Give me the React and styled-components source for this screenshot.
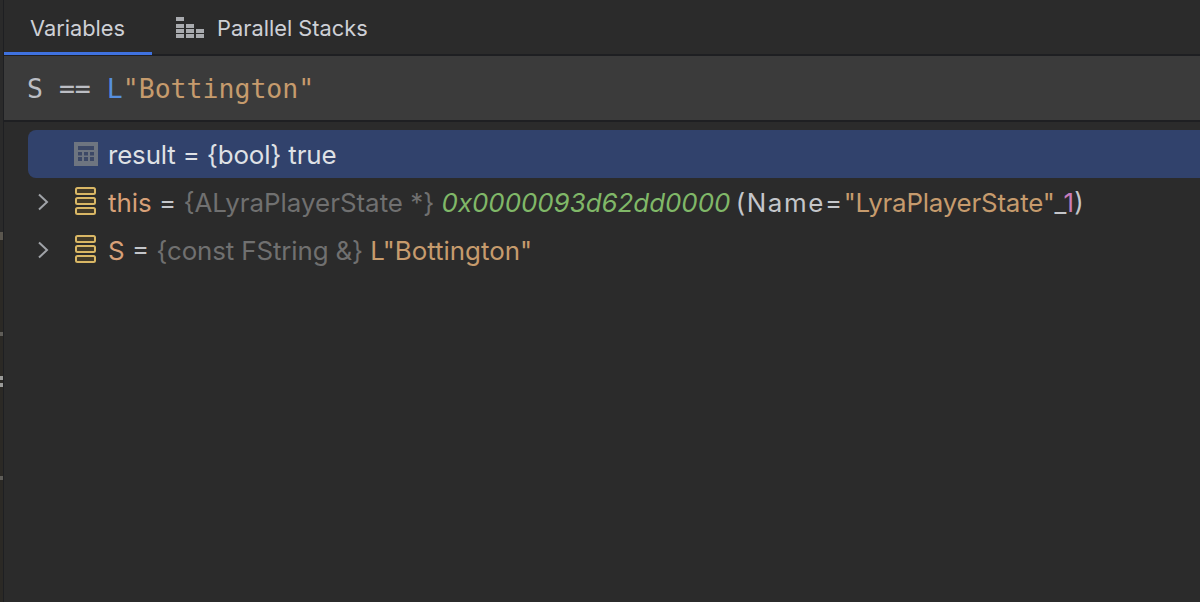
import styled, { createGlobalStyle } from "styled-components";

const GlobalStyle = createGlobalStyle`
  html, body {
    margin: 0;
    height: 100%;
    overflow: hidden;
    background: #2b2b2b;
  }
  #root {
    height: 100%;
  }
`;

const colors = {
  plain: "#c4c6ca",
  muted: "#707070",
  orange: "#d7a078",
  tan: "#c69b6d",
  green: "#80b868",
  pink: "#c77dbb",
  blue: "#568fdf",
};

const StackIcon = () => (
  <svg width="22" height="30" viewBox="0 0 22 30" fill="#423a29" stroke="#d9b765" strokeWidth="2">
    <rect x="2" y="1" width="19" height="6" rx="1.5" />
    <rect x="2" y="11" width="19" height="6" rx="1.5" />
    <rect x="2" y="21" width="19" height="6" rx="1.5" />
  </svg>
);

const TableIcon = () => (
  <svg width="24" height="24" viewBox="0 0 24 24">
    <rect width="24" height="24" fill="#6e7580" />
    <g fill="#3c4866">
      <rect x="4" y="4" width="16" height="4" />
      <rect x="4" y="10" width="4" height="3.5" />
      <rect x="10" y="10" width="4" height="3.5" />
      <rect x="16" y="10" width="4" height="3.5" />
      <rect x="4" y="15" width="4" height="4" />
      <rect x="10" y="15" width="4" height="4" />
      <rect x="16" y="15" width="4" height="4" />
    </g>
  </svg>
);

const StacksIcon = () => (
  <svg width="28" height="22" viewBox="0 0 28 22" fill="#a9abaf">
    <rect x="0" y="0" width="8" height="4" />
    <rect x="0" y="7" width="8" height="4" />
    <rect x="0" y="12" width="8" height="4" />
    <rect x="0" y="17" width="8" height="4" />
    <rect x="10" y="7" width="8" height="4" />
    <rect x="10" y="12" width="8" height="4" />
    <rect x="10" y="17" width="8" height="4" />
    <rect x="20" y="12" width="8" height="4" />
    <rect x="20" y="17" width="8" height="4" />
  </svg>
);

const Chevron = () => (
  <svg width="12" height="18" viewBox="0 0 12 18" fill="none" stroke="#a0a3a8" strokeWidth="2">
    <path d="M2 1.5L10 9l-8 7.5" />
  </svg>
);

export default function App() {
  return (
    <Page>
      <GlobalStyle />
      <SideStrip />
      <Main>
        <TabBar>
          <Tab $active>Variables</Tab>
          <Tab>
            <StacksIcon />
            Parallel Stacks
          </Tab>
        </TabBar>
        <Expression>
          <span>S == </span>
          <Colored $color={colors.blue}>L</Colored>
          <Colored $color={colors.tan}>"Bottington"</Colored>
        </Expression>
        <Tree>
          <Row $selected>
            <Arrow />
            <IconSlot>
              <TableIcon />
            </IconSlot>
            <RowText>
              <Colored $color="#dfe1e5" $spacing="-0.15px">result = {"{bool}"} true</Colored>
            </RowText>
          </Row>
          <Row>
            <Arrow>
              <Chevron />
            </Arrow>
            <IconSlot>
              <StackIcon />
            </IconSlot>
            <RowText>
              <Colored $color={colors.orange}>this</Colored> ={" "}
              <Colored $color={colors.muted}>{"{ALyraPlayerState *}"}</Colored>{" "}
              <Address>0x0000093d62dd0000</Address> <NameKey>(Name=</NameKey>
              <Colored $color={colors.tan} $spacing="-0.2px">"LyraPlayerState"</Colored>
              _<Colored $color={colors.pink}>1</Colored>)
            </RowText>
          </Row>
          <Row>
            <Arrow>
              <Chevron />
            </Arrow>
            <IconSlot>
              <StackIcon />
            </IconSlot>
            <RowText>
              <Colored $color={colors.orange}>S</Colored> ={" "}
              <Colored $color={colors.muted} $spacing="-0.12px">{"{const FString &}"}</Colored>{" "}
              <Colored $color={colors.tan}>L"Bottington"</Colored>
            </RowText>
          </Row>
        </Tree>
      </Main>
    </Page>
  );
}

const Page = styled.div`
  display: flex;
  height: 100%;
  background: #2b2b2b;
  font-family: Inter, "Noto Sans", sans-serif;
`;

/* sliver of the neighbouring panel, cut off by the crop */
const SideStrip = styled.div`
  width: 3px;
  flex: none;
  background: linear-gradient(
    to bottom,
    #2a2a2a 0 232px,
    #5a564e 232px 240px,
    #2b2925 240px 332px,
    #5f5d58 332px 336px,
    #2b2925 336px 376px,
    #9a9a98 376px 380px,
    #2b2925 380px 383px,
    #9a9a98 383px 387px,
    #2b2925 387px 476px,
    #5f5d58 476px 480px,
    #2b2925 480px 100%
  );
  border-right: 1px solid #1e1f22;
`;

const Main = styled.div`
  flex: 1;
  min-width: 0;
  display: flex;
  flex-direction: column;
`;

const TabBar = styled.div`
  display: flex;
  height: 54px;
  flex: none;
  border-bottom: 2px solid #1e1f22;
`;

const Tab = styled.div`
  display: flex;
  align-items: center;
  gap: 13px;
  height: 55px;
  box-sizing: border-box;
  padding: ${props => (props.$active ? "4px 27px 0 26px" : "4px 0 0 24px")};
  font-size: 21.8px;
  color: #ced0d6;
  border-bottom: 3px solid ${props => (props.$active ? "#3f72e0" : "transparent")};
`;

const Expression = styled.div`
  height: 64px;
  flex: none;
  display: flex;
  align-items: center;
  padding-left: 23px;
  background: #3b3b3b;
  border-bottom: 2px solid #1e1f22;
  font-family: "DejaVu Sans Mono", monospace;
  font-size: 26.5px;
  color: #bcbec4;
  white-space: pre;
`;

const Colored = styled.span`
  color: ${props => props.$color};
  letter-spacing: ${props => props.$spacing || "0"};
`;

const Address = styled.span`
  color: ${colors.green};
  font-style: italic;
`;

const NameKey = styled.span`
  margin-left: -2px;
  letter-spacing: 1.6px;
`;

const Tree = styled.div`
  padding: 8px 0 0 24px;
`;

const Row = styled.div`
  display: flex;
  align-items: center;
  height: 48px;
  background: ${props => (props.$selected ? "#31426c" : "transparent")};
  border-radius: 8px 0 0 8px;
`;

const Arrow = styled.div`
  width: 37px;
  padding-left: 9px;
  flex: none;
  display: flex;
`;

const IconSlot = styled.div`
  width: 34px;
  flex: none;
  display: flex;
  align-items: center;
`;

const RowText = styled.div`
  font-size: 25.9px;
  color: ${colors.plain};
  white-space: pre;
`;
